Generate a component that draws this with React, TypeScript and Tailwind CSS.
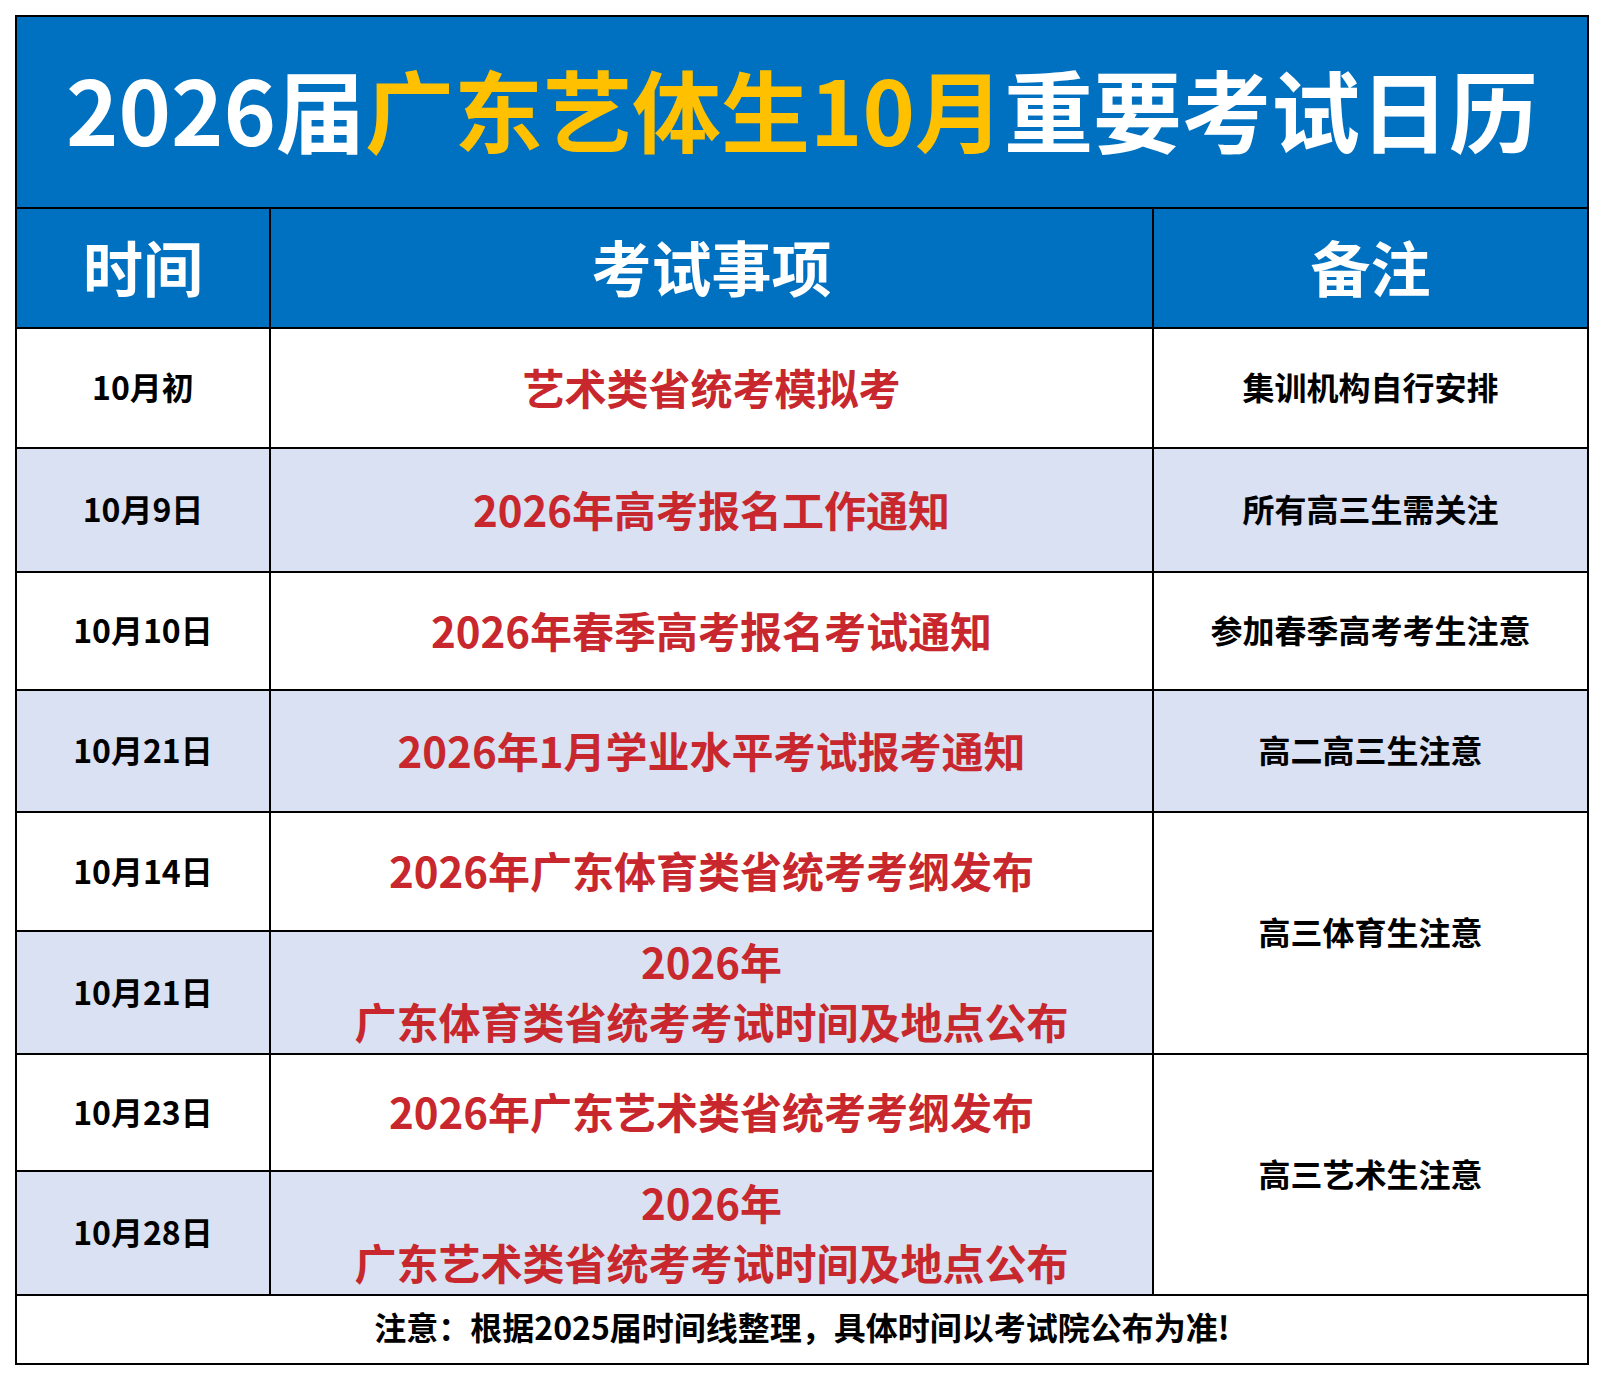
import React from 'react';

type Row = {
  date: string;
  item: string[];
  note?: string;
  noteSpan?: number;
  shaded: boolean;
};

const rows: Row[] = [
  { date: '10月初', item: ['艺术类省统考模拟考'], note: '集训机构自行安排', shaded: false },
  { date: '10月9日', item: ['2026年高考报名工作通知'], note: '所有高三生需关注', shaded: true },
  { date: '10月10日', item: ['2026年春季高考报名考试通知'], note: '参加春季高考考生注意', shaded: false },
  { date: '10月21日', item: ['2026年1月学业水平考试报考通知'], note: '高二高三生注意', shaded: true },
  { date: '10月14日', item: ['2026年广东体育类省统考考纲发布'], note: '高三体育生注意', noteSpan: 2, shaded: false },
  { date: '10月21日', item: ['2026年', '广东体育类省统考考试时间及地点公布'], shaded: true },
  { date: '10月23日', item: ['2026年广东艺术类省统考考纲发布'], note: '高三艺术生注意', noteSpan: 2, shaded: false },
  { date: '10月28日', item: ['2026年', '广东艺术类省统考考试时间及地点公布'], shaded: true },
];

const font = { fontFamily: '"Noto Sans CJK SC", "Noto Sans", sans-serif' };

export default function App() {
  return (
    <div className="min-h-[1380px] w-[1604px] bg-white pt-[15px] pl-[15px]" style={font}>
      <div className="grid w-[1574px] grid-cols-[252px_881px_433px] grid-rows-[190px_118px_118px_122px_116px_120px_117px_121px_115px_122px_67px] gap-[2px] bg-black p-[2px]">
        {/* Title */}
        <div className="col-span-3 flex items-center justify-center bg-[#0070c0] pb-[9px] text-[89px] font-bold leading-none text-white">
          <span>2026届</span>
          <span className="text-[#ffc000]">广东艺体生10月</span>
          <span>重要考试日历</span>
        </div>

        {/* Header */}
        {['时间', '考试事项', '备注'].map((h) => (
          <div key={h} className="flex items-center justify-center bg-[#0070c0] pb-[5px] text-[60px] font-bold leading-none text-white">
            {h}
          </div>
        ))}

        {/* Body */}
        {rows.map((r, i) => {
          const bg = r.shaded ? 'bg-[#d9e1f2]' : 'bg-white';
          return (
            <React.Fragment key={i}>
              <div className={`flex items-center justify-center ${bg} pb-[4px] text-[32px] font-bold leading-none text-black`}>
                {r.date}
              </div>
              <div className={`flex flex-col items-center justify-center ${bg} pb-[3px] text-[42px] font-bold leading-[60px] text-[#c8282d]`}>
                {r.item.map((line) => (
                  <span key={line}>{line}</span>
                ))}
              </div>
              {r.note && (
                <div
                  className={`flex items-center justify-center ${r.noteSpan === 2 ? 'row-span-2 bg-white' : bg} pb-[4px] text-[32px] font-bold leading-none text-black`}
                >
                  {r.note}
                </div>
              )}
            </React.Fragment>
          );
        })}

        {/* Footer */}
        <div className="col-span-3 flex items-center justify-center bg-white pb-[7px] text-[32px] font-bold leading-none text-black">
          注意：根据2025届时间线整理，具体时间以考试院公布为准!
        </div>
      </div>
    </div>
  );
}
